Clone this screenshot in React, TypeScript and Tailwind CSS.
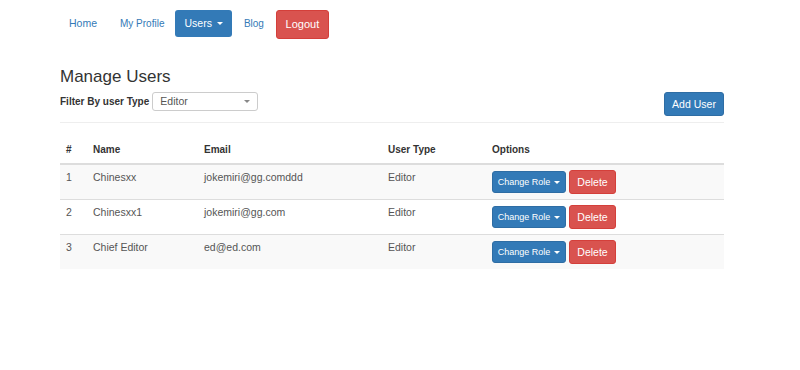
import React from "react";

const Caret = ({ className = "" }: { className?: string }) => (
  <span
    className={`inline-block w-0 h-0 border-l-[3px] border-r-[3px] border-t-[3px] border-l-transparent border-r-transparent border-t-white align-middle ${className}`}
  />
);

const rows = [
  { id: 1, name: "Chinesxx", email: "jokemiri@gg.comddd", type: "Editor" },
  { id: 2, name: "Chinesxx1", email: "jokemiri@gg.com", type: "Editor" },
  { id: 3, name: "Chief Editor", email: "ed@ed.com", type: "Editor" },
];

export default function App() {
  return (
    <div
      className="w-[800px] h-[370px] bg-white text-[#333] text-[10.5px] leading-[15px]"
      style={{ fontFamily: '"Liberation Sans", Arial, Helvetica, sans-serif' }}
    >
      <div className="ml-[60px] w-[664px]">
        {/* Nav */}
        <nav className="flex items-start pt-[10px] -ml-[2px]">
          <a className="px-[11px] h-[27px] flex items-center text-[#337ab7] rounded-[3px]">Home</a>
          <a className="ml-[1px] px-[11px] h-[27px] flex items-center text-[#337ab7] rounded-[3px] text-[10px]">My Profile</a>
          <a className="px-[9px] h-[27px] flex items-center gap-[5px] bg-[#337ab7] text-white rounded-[3px]">
            Users <Caret />
          </a>
          <a className="ml-[1px] px-[11px] h-[27px] flex items-center text-[#337ab7] rounded-[3px] text-[10px]">Blog</a>
          <button className="ml-[1px] w-[53px] h-[29px] flex items-center justify-center bg-[#d9534f] border border-[#d43f3a] text-white rounded-[3px] text-[11px]">
            Logout
          </button>
        </nav>

        {/* Title */}
        <h1 className="mt-[28px] text-[17px] leading-[20px] font-normal text-[#333]">Manage Users</h1>

        <div className="flex items-start justify-between mt-[5px]">
          <div className="flex items-center gap-[3px]">
            <span className="font-bold text-[10px]">Filter By user Type</span>
            <div className="relative w-[106px] h-[19px] border border-[#ccc] rounded-[3px] flex items-center pl-[7px] text-[#555] text-[10.5px]">
              Editor
              <span className="absolute right-[7px] top-[7px] w-0 h-0 border-l-[3px] border-r-[3px] border-t-[3px] border-l-transparent border-r-transparent border-t-[#888]" />
            </div>
          </div>
          <button className="w-[60px] h-[24px] flex items-center justify-center bg-[#337ab7] border border-[#2e6da4] text-white rounded-[3px] text-[10.5px]">
            Add User
          </button>
        </div>

        <div className="mt-[6px] border-t border-[#eee]" />

        {/* Table */}
        <table className="w-full mt-[13px] border-collapse text-left">
          <colgroup>
            <col className="w-[27px]" />
            <col className="w-[111px]" />
            <col className="w-[184px]" />
            <col className="w-[104px]" />
            <col />
          </colgroup>
          <thead>
            <tr className="border-b-2 border-[#ddd]">
              <th className="px-[6px] py-[6px] font-bold text-[10px]">#</th>
              <th className="px-[6px] py-[6px] font-bold text-[10px]">Name</th>
              <th className="px-[6px] py-[6px] font-bold text-[10px]">Email</th>
              <th className="px-[6px] py-[6px] font-bold text-[10px]">User Type</th>
              <th className="px-[6px] py-[6px] font-bold text-[10px]">Options</th>
            </tr>
          </thead>
          <tbody className="text-[#555]">
            {rows.map((r, i) => (
              <tr key={r.id} className={`${i > 0 ? "border-t border-[#ddd]" : ""} ${i % 2 === 0 ? "bg-[#f9f9f9]" : "bg-white"}`}>
                <td className="px-[6px] pt-[5px] pb-[14px] align-top">{r.id}</td>
                <td className="px-[6px] pt-[5px] pb-[14px] align-top">{r.name}</td>
                <td className="px-[6px] pt-[5px] pb-[14px] align-top">{r.email}</td>
                <td className="px-[6px] pt-[5px] pb-[14px] align-top">{r.type}</td>
                <td className="px-[6px] py-[5px] align-top">
                  <div className="flex items-center gap-[3px]">
                    <button className="w-[74px] h-[22px] flex items-center justify-center gap-[4px] bg-[#337ab7] border border-[#2e6da4] text-white rounded-[3px] text-[9px]">
                      Change Role <Caret />
                    </button>
                    <button className="w-[47px] h-[24px] flex items-center justify-center bg-[#d9534f] border border-[#d43f3a] text-white rounded-[3px] text-[10.5px]">
                      Delete
                    </button>
                  </div>
                </td>
              </tr>
            ))}
          </tbody>
        </table>
      </div>
    </div>
  );
}
